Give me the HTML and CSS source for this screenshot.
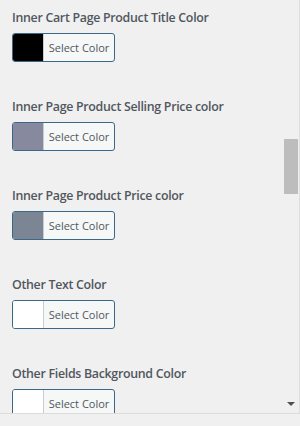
FILE: index.html
```html
<!DOCTYPE html>
<html lang="en">
<head>
    <meta charset="UTF-8">
    <meta name="viewport" content="width=device-width, initial-scale=1.0">
    <title>Colour Settings</title>
    <link rel="stylesheet" href="styles.css">
</head>
<body>
    <div class="frame">
        <div class="panel">
            <div class="fields">
                <div class="field">
                    <h3>Inner Cart Page Product Title Color</h3>
                    <button class="color-result" type="button"><span class="swatch swatch-black"></span><span class="label">Select Color</span></button>
                </div>
                <div class="field">
                    <h3>Inner Page Product Selling Price color</h3>
                    <button class="color-result" type="button"><span class="swatch swatch-slate"></span><span class="label">Select Color</span></button>
                </div>
                <div class="field">
                    <h3>Inner Page Product Price color</h3>
                    <button class="color-result" type="button"><span class="swatch swatch-grey"></span><span class="label">Select Color</span></button>
                </div>
                <div class="field">
                    <h3>Other Text Color</h3>
                    <button class="color-result" type="button"><span class="swatch swatch-white"></span><span class="label">Select Color</span></button>
                </div>
                <div class="field">
                    <h3>Other Fields Background Color</h3>
                    <button class="color-result" type="button"><span class="swatch swatch-white"></span><span class="label">Select Color</span></button>
                </div>
            </div>
            <div class="scrollbar">
                <div class="thumb"></div>
                <div class="arrow-down"></div>
            </div>
        </div>
    </div>
</body>
</html>
```

FILE: styles.css
```css
/* page */
body {
    margin: 0;
    background-color: #f0f0f0;
    font-family: "Open Sans", "Noto Sans", sans-serif;
    color: #50575e;
}

.frame {
    height: 426px;
    overflow: hidden;
}

.panel {
    display: flex;
    height: 413px;
    border-bottom: 1px solid #dcdcdc;
    overflow: hidden;
}

.fields {
    flex: 1;
    padding: 8px 0 0 12px;
}

.field {
    height: 89px;
}

.field h3 {
    margin: 0;
    font-size: 12.4px;
    font-weight: 600;
    letter-spacing: -0.3px;
    line-height: 20px;
    color: #50575e;
}

/* colour picker button */
.color-result {
    display: flex;
    align-items: stretch;
    width: 103px;
    height: 29px;
    margin-top: 5px;
    padding: 0;
    border: 1px solid #3b6788;
    border-radius: 3px;
    background-color: #f6f7f7;
    overflow: hidden;
    cursor: pointer;
}

.swatch {
    width: 30px;
    border-right: 1px solid #c9cdd1;
}

.swatch-black { background-color: #000000; }
.swatch-slate { background-color: #878a9e; }
.swatch-grey { background-color: #7c8593; }
.swatch-white { background-color: #ffffff; }

.color-result .label {
    flex: 1;
    font-family: "Open Sans", "Noto Sans", sans-serif;
    font-size: 11px;
    line-height: 27px;
    color: #50575e;
    text-align: center;
}

/* fake scrollbar */
.scrollbar {
    width: 16px;
    display: flex;
    flex-direction: column;
    align-items: center;
    border-right: 1px solid #dedede;
}

.thumb {
    width: 14px;
    height: 55px;
    margin-top: 139px;
    background-color: #bdbdbd;
}

.arrow-down {
    margin-top: auto;
    margin-bottom: 7px;
    width: 0;
    height: 0;
    border-left: 4px solid transparent;
    border-right: 4px solid transparent;
    border-top: 4px solid #505050;
}
```
